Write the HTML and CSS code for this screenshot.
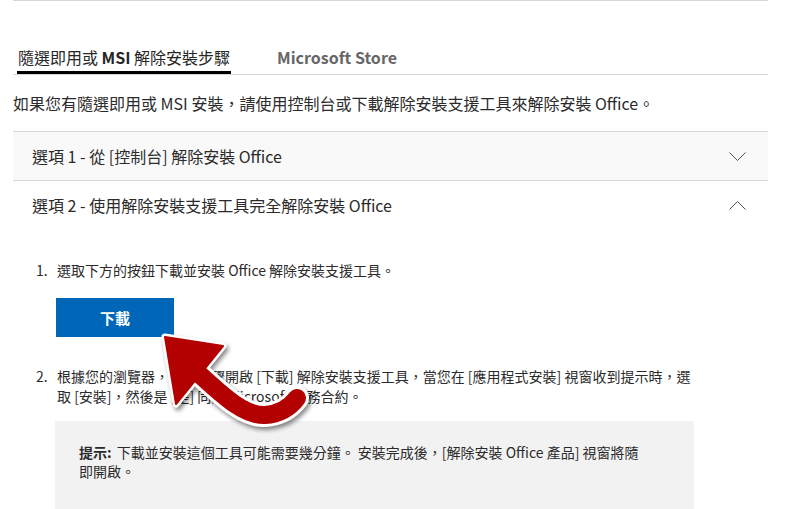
FILE: index.html
```html
<!DOCTYPE html>
<html lang="zh-Hant">
<head>
<meta charset="utf-8">
<title>解除安裝 Office</title>
<link rel="stylesheet" href="styles.css">
</head>
<body>
<div class="page">
  <div class="topline"></div>
  <div class="tabs">
    <div class="tab active">隨選即用或 <b>MSI</b> 解除安裝步驟</div>
    <div class="tab">Microsoft Store</div>
  </div>
  <p class="intro">如果您有隨選即用或 MSI 安裝，請使用控制台或下載解除安裝支援工具來解除安裝 Office。</p>
  <div class="accordion">
    <div class="acc-head closed">
      <span>選項 1 - 從 [控制台] 解除安裝 Office</span>
      <svg class="chev" width="17" height="9" viewBox="0 0 17 9"><polyline points="0.5,0.5 8.5,8.5 16.5,0.5" fill="none" stroke="#505050" stroke-width="1"/></svg>
    </div>
    <div class="acc-item">
      <div class="acc-head">
        <span>選項 2 - 使用解除安裝支援工具完全解除安裝 Office</span>
        <svg class="chev" width="17" height="9" viewBox="0 0 17 9"><polyline points="0.5,8.5 8.5,0.5 16.5,8.5" fill="none" stroke="#505050" stroke-width="1"/></svg>
      </div>
      <div class="acc-body">
        <ol class="steps">
          <li class="step">
            <span class="num">1.</span>
            <div class="step-text">選取下方的按鈕下載並安裝 Office 解除安裝支援工具。
              <button class="dl">下載</button>
            </div>
          </li>
          <li class="step">
            <span class="num">2.</span>
            <div class="step-text">根據您的瀏覽器，依照步驟開啟 [下載] 解除安裝支援工具，當您在 [應用程式安裝] 視窗收到提示時，選取 [安裝]，然後是 [是] 同意 Microsoft 服務合約。</div>
          </li>
        </ol>
        <div class="tip"><p><b class="tip-label">提示:</b> <span>下載並安裝這個工具可能需要幾分鐘。 安裝完成後，[解除安裝 Office 產品] 視窗將隨</span><br><span>即開啟。</span></p></div>
      </div>
    </div>
  </div>
  <svg class="arrow" width="790" height="509" viewBox="0 0 790 509">
    <g class="arrow-g">
      <path d="M197,372 C222,395 244,416 265,415 C281,414 291,406 297,398" fill="none" stroke="#ffffff" stroke-width="24" stroke-linecap="round"/>
      <polygon points="165,337 223,346 176,404" fill="#ffffff" stroke="#ffffff" stroke-width="7" stroke-linejoin="round"/>
      <path d="M197,372 C222,395 244,416 265,415 C281,414 291,406 297,398" fill="none" stroke="#b30000" stroke-width="18" stroke-linecap="round"/>
      <polygon points="165,337 223,346 176,404" fill="#b30000" stroke="#b30000" stroke-width="2" stroke-linejoin="round"/>
    </g>
  </svg>
</div>
</body>
</html>
```
FILE: styles.css
```css
html, body {
  margin: 0;
  padding: 0;
  background: #ffffff;
}
body {
  font-family: "Noto Sans CJK TC", "Noto Sans", sans-serif;
  color: #2b2b2b;
}
.page {
  width: 755px;
  height: 509px;
  margin-left: 13px;
  overflow: hidden;
}
.topline {
  height: 1px;
  background: #d6d6d6;
}
.tabs {
  display: flex;
  gap: 45px;
  padding: 44px 0 0 4px;
  border-bottom: 1px solid #d6d6d6;
}
.tab {
  font-size: 16px;
  line-height: 24px;
  padding: 0 1px 2px;
  border-bottom: 3px solid transparent;
  color: #666666;
  font-weight: 700;
}
.tab.active {
  color: #262626;
  font-weight: 400;
  border-bottom-color: #000000;
}
.tab.active b {
  font-weight: 700;
}
.intro {
  margin: 16px 0 0;
  font-size: 16px;
  line-height: 24px;
}
.accordion {
  margin-top: 16px;
  border-top: 1px solid #d6d6d6;
}
.acc-head {
  display: flex;
  justify-content: space-between;
  align-items: center;
  height: 48px;
  padding: 0 22px 0 19px;
  font-size: 16px;
  line-height: 24px;
}
.acc-head.closed {
  background: #f9f9f9;
  border-bottom: 1px solid #d6d6d6;
}
.chev {
  display: block;
}
.acc-body {
  padding: 31px 0 0 23px;
}
.steps {
  list-style: none;
  margin: 0;
  padding: 0;
}
.step {
  display: flex;
  font-size: 14px;
  line-height: 20px;
}
.step + .step {
  margin-top: 29px;
}
.num {
  flex: none;
  width: 21px;
}
.step-text {
  max-width: 636px;
}
.dl {
  display: block;
  margin: 18px 0 0 -1px;
  width: 118px;
  height: 39px;
  border: none;
  background: #0067b8;
  color: #ffffff;
  font-family: "Noto Sans CJK TC", sans-serif;
  font-size: 15px;
  font-weight: 700;
  padding: 0;
}
.tip {
  margin: 15px 0 0 19px;
  width: 639px;
  box-sizing: border-box;
  background: #f2f2f2;
  padding: 22px 24px 40px;
  font-size: 14px;
  line-height: 19px;
}
.tip p {
  margin: 0;
}
.tip-label {
  margin-right: 2px;
}
.arrow {
  position: absolute;
  top: 0;
  left: 0;
  pointer-events: none;
}
.arrow-g {
  filter: drop-shadow(2px 3px 2px rgba(0, 0, 0, 0.45));
}
```
